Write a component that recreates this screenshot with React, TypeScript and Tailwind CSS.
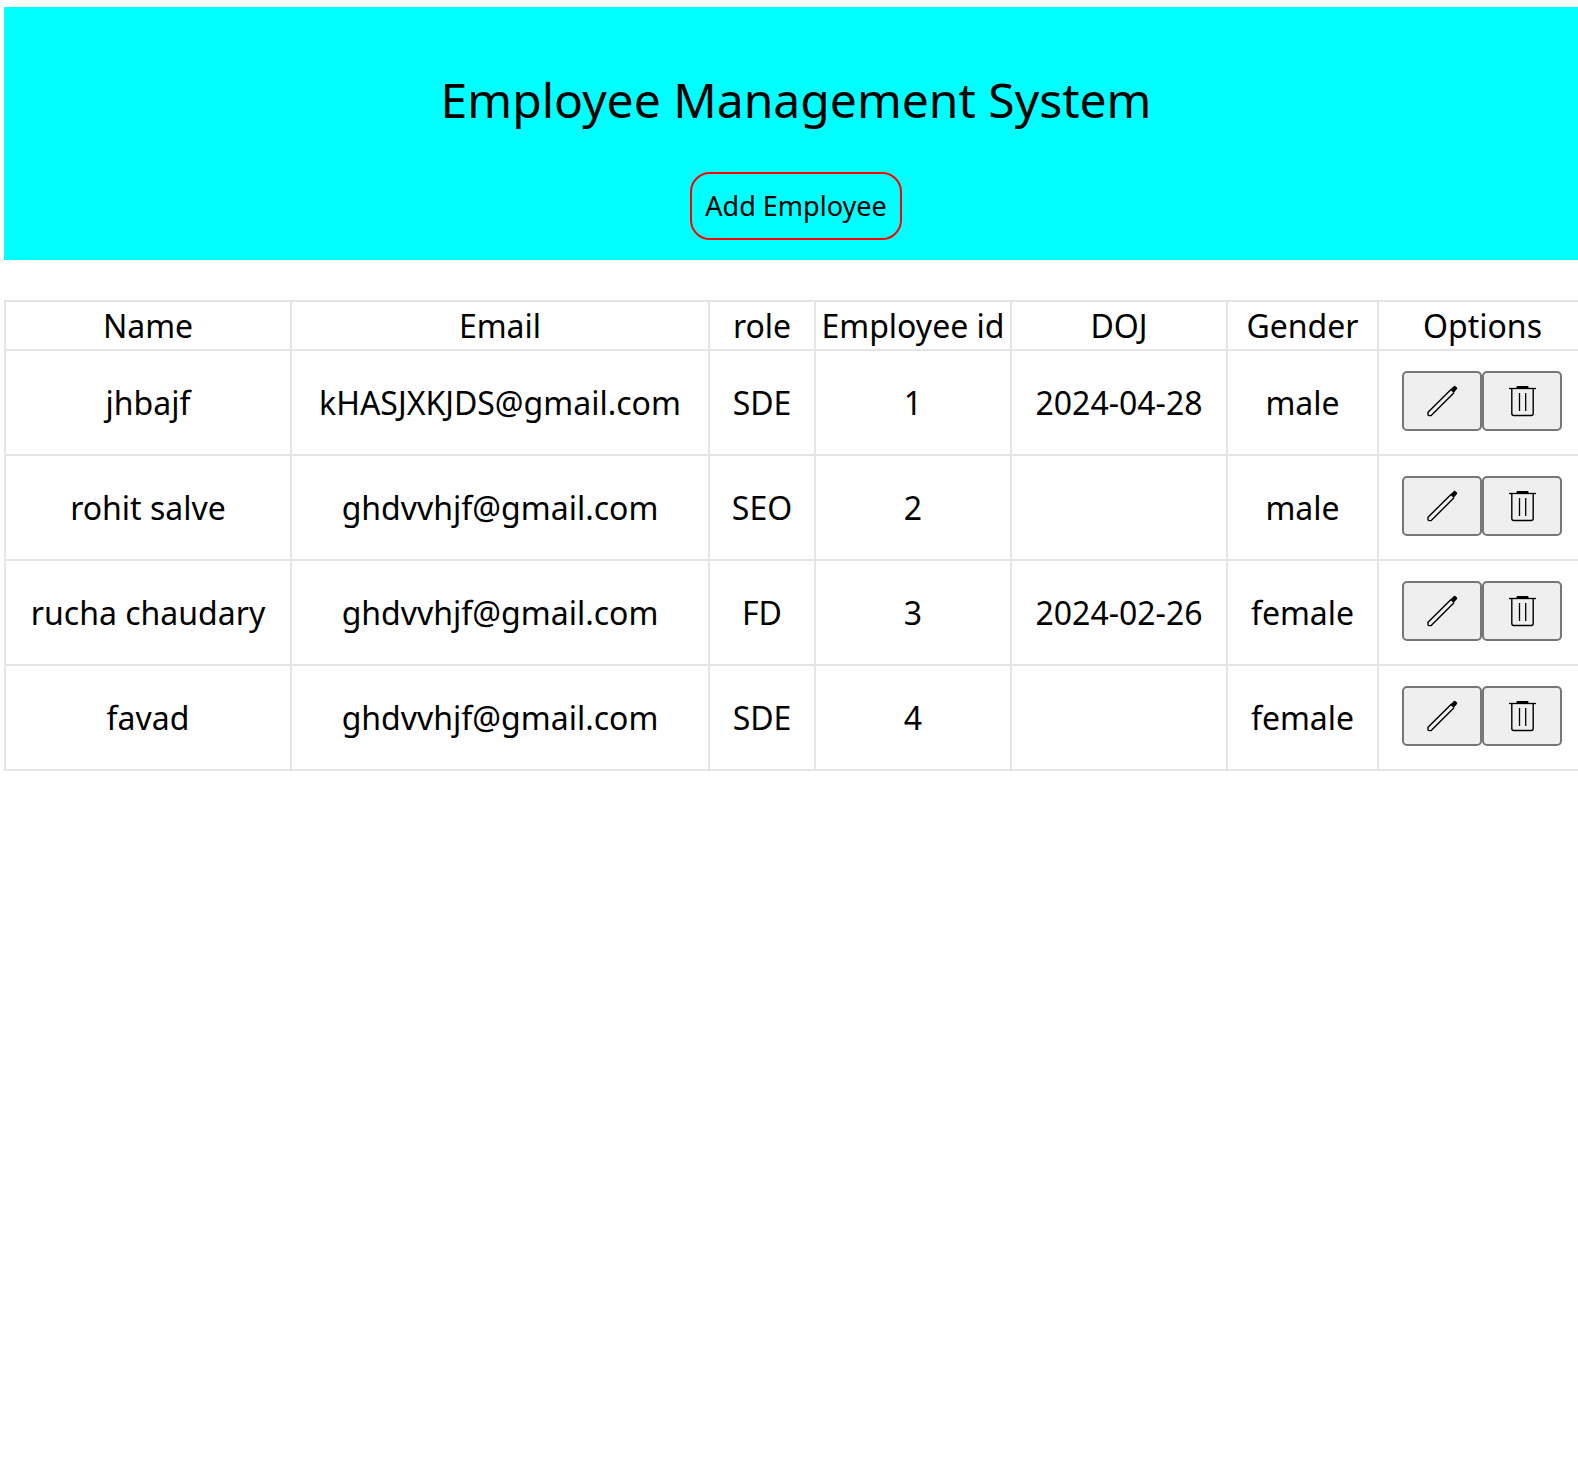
type Employee = {
  id: number;
  name: string;
  email: string;
  role: string;
  doj: string;
  gender: string;
};

const employees: Employee[] = [
  { id: 1, name: "jhbajf", email: "kHASJXKJDS@gmail.com", role: "SDE", doj: "2024-04-28", gender: "male" },
  { id: 2, name: "rohit salve", email: "ghdvvhjf@gmail.com", role: "SEO", doj: "", gender: "male" },
  { id: 3, name: "rucha chaudary", email: "ghdvvhjf@gmail.com", role: "FD", doj: "2024-02-26", gender: "female" },
  { id: 4, name: "favad", email: "ghdvvhjf@gmail.com", role: "SDE", doj: "", gender: "female" },
];

const columns = [
  { title: "Name", width: "w-[286px]" },
  { title: "Email", width: "w-[418px]" },
  { title: "role", width: "w-[106px]" },
  { title: "Employee id", width: "w-[196px]" },
  { title: "DOJ", width: "w-[216px]" },
  { title: "Gender", width: "w-[151px]" },
  { title: "Options", width: "w-[209px]" },
];

function PencilIcon() {
  return (
    <svg viewBox="0 0 32 32" className="size-8" fill="none" stroke="black" strokeWidth="1.4" aria-hidden="true">
      <path d="M25 4.4 2 27.2V29.6Q2 30.600 3 30.600H5.200L28 7.800" strokeLinejoin="round" />
      <path d="M24.200 4.600 28 1Q28.600 .6 29.300 1L31 2.600Q31.600 3.300 31 4L27.600 8Z" fill="black" stroke="none" />
    </svg>
  );
}

function TrashIcon() {
  return (
    <svg viewBox="0 0 32 32" className="size-8" fill="none" stroke="black" aria-hidden="true">
      <path d="M3 3.5H30" strokeWidth="1.3" />
      <path d="M10.5 3.5V2Q10.5 1 11.5 1H21.5Q22.5 1 22.5 2V3.5Z" fill="black" stroke="none" />
      <path d="M5.8 3.5V28.5Q5.8 30.5 7.8 30.5H25.2Q27.2 30.5 27.2 28.5V3.5" strokeWidth="1.4" />
      <path d="M13.5 8V26M19.7 8V26" strokeWidth="1.3" />
    </svg>
  );
}

const optionButton =
  "flex h-[60px] w-20 items-center justify-center rounded-[5px] border-2 border-[#767676] bg-[#efefef]";

export default function App() {
  return (
    <div className="overflow-x-hidden bg-white font-['Noto_Sans',sans-serif] text-black">
      <div className="-mr-2.5 ml-1 pt-[7px]">
        <header className="flex flex-col items-center gap-10 bg-[#00ffff] pt-[60px] pb-5">
          <h1 className="text-[48px] leading-[65px]">Employee Management System</h1>
          <button type="button" className="h-[68px] rounded-[20px] border-2 border-[#ff0000] px-[13px] text-[27px]">
            Add Employee
          </button>
        </header>

        <table className="mt-10 w-full table-fixed border-collapse text-center text-[32px] leading-[44px]">
          <colgroup>
            {columns.map((c) => (
              <col key={c.title} className={c.width} />
            ))}
          </colgroup>
          <thead>
            <tr className="h-[49px]">
              {columns.map((c) => (
                <th key={c.title} className="border-2 border-[#e5e5e5] font-normal whitespace-nowrap">
                  {c.title}
                </th>
              ))}
            </tr>
          </thead>
          <tbody>
            {employees.map((e) => (
              <tr key={e.id} className="h-[105px]">
                <td className="border-2 border-[#e5e5e5]">{e.name}</td>
                <td className="border-2 border-[#e5e5e5]">{e.email}</td>
                <td className="border-2 border-[#e5e5e5]">{e.role}</td>
                <td className="border-2 border-[#e5e5e5]">{e.id}</td>
                <td className="border-2 border-[#e5e5e5]">{e.doj}</td>
                <td className="border-2 border-[#e5e5e5]">{e.gender}</td>
                <td className="border-2 border-[#e5e5e5] pt-5 pr-0.5 align-top">
                  <div className="flex justify-center">
                    <button type="button" aria-label={`Edit ${e.name}`} className={optionButton}>
                      <PencilIcon />
                    </button>
                    <button type="button" aria-label={`Delete ${e.name}`} className={optionButton}>
                      <TrashIcon />
                    </button>
                  </div>
                </td>
              </tr>
            ))}
          </tbody>
        </table>
      </div>
    </div>
  );
}
